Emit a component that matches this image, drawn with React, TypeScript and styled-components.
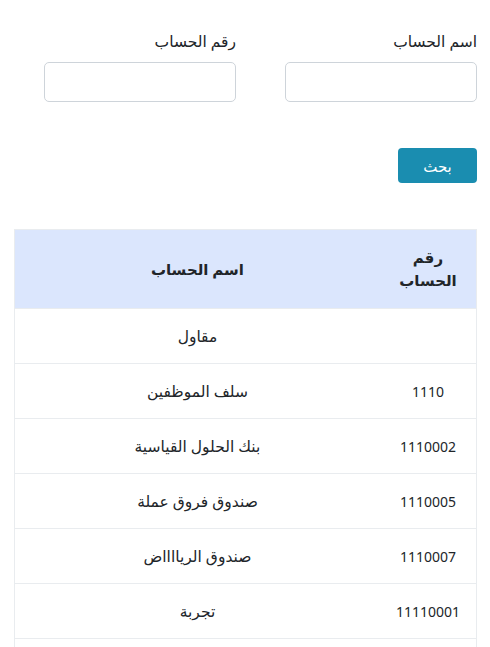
import React from "react"
import styled, { createGlobalStyle } from "styled-components"

const accounts = [
  { number: "", name: "مقاول" },
  { number: "1110", name: "سلف الموظفين" },
  { number: "1110002", name: "بنك الحلول القياسية" },
  { number: "1110005", name: "صندوق فروق عملة" },
  { number: "1110007", name: "صندوق الريااااض" },
  { number: "11110001", name: "تجربة" },
  { number: "", name: "" },
]

function App() {
  return (
    <Page dir="rtl">
      <GlobalStyle />
      <SearchForm>
        <Field>
          <Label>اسم الحساب</Label>
          <Input type="text" />
        </Field>
        <Field>
          <Label>رقم الحساب</Label>
          <Input type="text" />
        </Field>
      </SearchForm>
      <SearchButton>بحث</SearchButton>
      <Table>
        <thead>
          <tr>
            <HeadCell $narrow>رقم الحساب</HeadCell>
            <HeadCell>اسم الحساب</HeadCell>
          </tr>
        </thead>
        <tbody>
          {accounts.map((a, i) => (
            <tr key={i}>
              <Cell $narrow>{a.number}</Cell>
              <Cell>{a.name}</Cell>
            </tr>
          ))}
        </tbody>
      </Table>
    </Page>
  )
}

export default App

const GlobalStyle = createGlobalStyle`
  body {
    margin: 0;
    background: #ffffff;
    font-family: "Noto Sans", "DejaVu Sans", sans-serif;
    color: #212529;
  }
`

const Page = styled.div`
  padding: 31px 13px 0 14px;
`

const SearchForm = styled.div`
  display: grid;
  grid-template-columns: 192px 192px;
  gap: 49px;
  justify-content: start;
`

const Field = styled.div`
  display: flex;
  flex-direction: column;
  gap: 10px;
`

const Label = styled.label`
  font-size: 15.5px;
  line-height: 21px;
  color: #212529;
`

const Input = styled.input`
  box-sizing: border-box;
  height: 40px;
  border: 1px solid #ced4da;
  border-radius: 5px;
  background: #fff;
  padding: 6px 12px;
  font: inherit;
`

const SearchButton = styled.button`
  display: block;
  margin-top: 46px;
  width: 79px;
  height: 35px;
  border: none;
  border-radius: 4px;
  background: #1a8db0;
  color: #fff;
  font-family: "Noto Sans", "DejaVu Sans", sans-serif;
  font-size: 15px;
  cursor: pointer;
`

const Table = styled.table`
  margin-top: 46px;
  width: 463px;
  border-collapse: collapse;
  border: 1px solid #e9ecef;
`

const HeadCell = styled.th<{ $narrow?: boolean }>`
  background: #dbe6fd;
  height: 79px;
  box-sizing: border-box;
  width: ${(p) => (p.$narrow ? "93px" : "auto")};
  padding: 0 16px;
  font-size: 15px;
  line-height: 23px;
  font-weight: bold;
  text-align: center;
  color: #212529;
  border-bottom: 1px solid #e9ecef;
`

const Cell = styled.td<{ $narrow?: boolean }>`
  height: 55px;
  box-sizing: border-box;
  padding: 0 16px;
  font-size: ${(p) => (p.$narrow ? "14px" : "15.5px")};
  text-align: center;
  color: #212529;
  border-bottom: 1px solid #e9ecef;
  width: ${(p) => (p.$narrow ? "93px" : "auto")};
`
